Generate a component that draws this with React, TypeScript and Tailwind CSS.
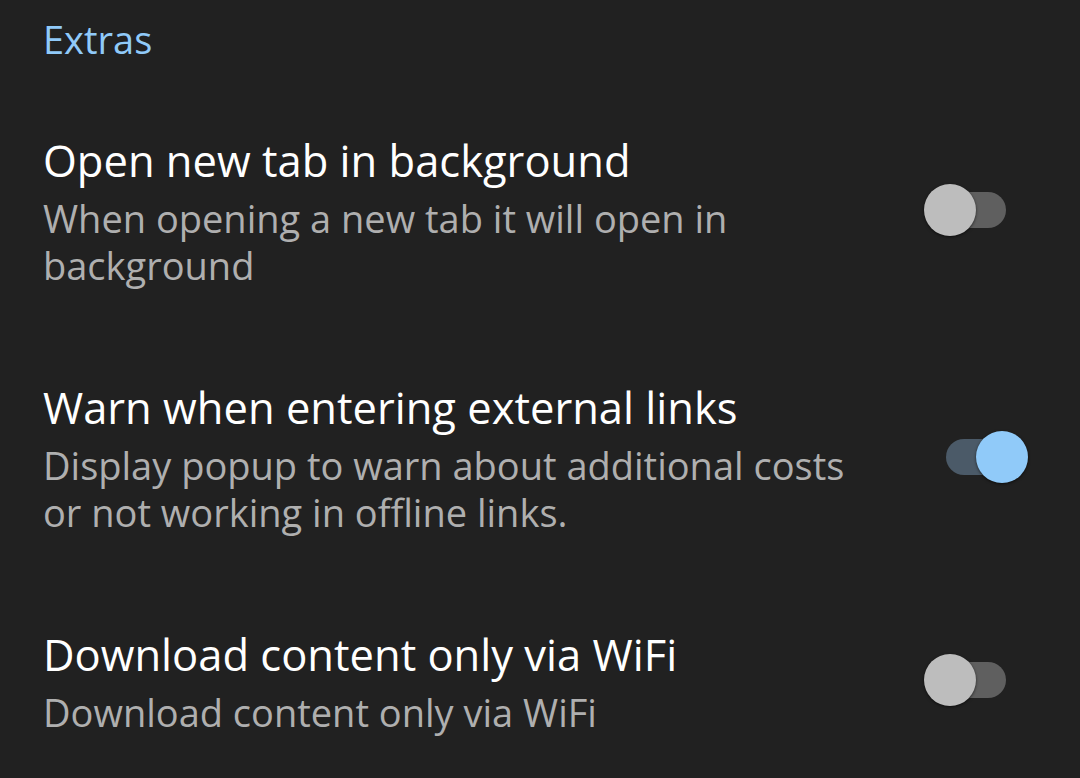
import React from 'react';

type Row = {
  title: string;
  lines: string[];
  on: boolean;
};

const rows: Row[] = [
  {
    title: 'Open new tab in background',
    lines: ['When opening a new tab it will open in', 'background'],
    on: false,
  },
  {
    title: 'Warn when entering external links',
    lines: ['Display popup to warn about additional costs', 'or not working in offline links.'],
    on: true,
  },
  {
    title: 'Download content only via WiFi',
    lines: ['Download content only via WiFi'],
    on: false,
  },
];

const Toggle = ({ on }: { on: boolean }) => {
  return (
    <div className="relative w-[104px] h-[52px] shrink-0 -translate-y-[3px]">
      <div
        className={
          on
            ? 'absolute left-[22px] top-[8px] w-[58px] h-[36px] rounded-full bg-[#4b5a68]'
            : 'absolute left-[24px] top-[8px] w-[58px] h-[36px] rounded-full bg-[#5f5f5f]'
        }
      />
      <div
        className={
          on
            ? 'absolute right-0 top-0 w-[52px] h-[52px] rounded-full bg-[#90caf9] shadow-[0_1px_3px_rgba(0,0,0,0.6)]'
            : 'absolute left-0 top-0 w-[52px] h-[52px] rounded-full bg-[#bdbdbd] shadow-[0_1px_3px_rgba(0,0,0,0.6)]'
        }
      />
    </div>
  );
};

const App = () => {
  return (
    <div
      className="min-h-screen bg-[#212121] pl-[43px] pr-[52px] pt-[14px]"
      style={{ fontFamily: '"Open Sans", "Noto Sans", sans-serif' }}
    >
      {/* Section header */}
      <h2 className="text-[38px] leading-[50px] text-[#90caf9]">Extras</h2>

      <div className="mt-[72px] flex flex-col gap-[94px]">
        {rows.map((row) => (
          <div key={row.title} className="flex items-center justify-between">
            <div className="flex flex-col">
              <div className="text-[43.5px] leading-[50px] text-white whitespace-nowrap">{row.title}</div>
              <div className="mt-[9px] text-[38px] leading-[47px] text-[#afafaf]">
                {row.lines.map((l) => (
                  <div key={l} className="whitespace-nowrap">{l}</div>
                ))}
              </div>
            </div>
            <Toggle on={row.on} />
          </div>
        ))}
      </div>
    </div>
  );
};

export default App;
